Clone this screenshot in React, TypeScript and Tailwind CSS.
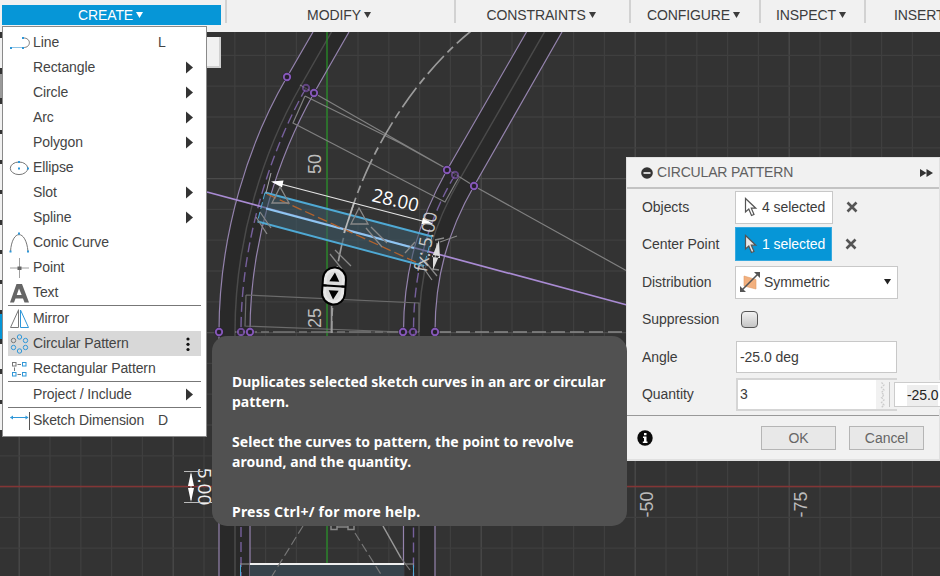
import React from "react";

const INK = "#3c3c3c";

type Item = { label: string; icon?: string; sub?: boolean; key_?: string; active?: boolean; top?: boolean };

const items: Item[] = [
  { label: "Line", icon: "line", key_: "L" },
  { label: "Rectangle", sub: true },
  { label: "Circle", sub: true },
  { label: "Arc", sub: true },
  { label: "Polygon", sub: true },
  { label: "Ellipse", icon: "ellipse" },
  { label: "Slot", sub: true },
  { label: "Spline", sub: true },
  { label: "Conic Curve", icon: "conic" },
  { label: "Point", icon: "point" },
  { label: "Text", icon: "text" },
  { label: "Mirror", icon: "mirror", top: true },
  { label: "Circular Pattern", icon: "circ", active: true },
  { label: "Rectangular Pattern", icon: "rect" },
  { label: "Project / Include", sub: true, top: true },
  { label: "Sketch Dimension", icon: "dim", key_: "D", top: true },
];

function MenuIcon({ name }: { name?: string }) {
  const b = "#2f97d8";
  const g = "#777";
  return (
    <svg width="25" height="24" viewBox="0 0 25 24" fill="none" className="shrink-0">
      {name === "line" && (
        <g>
          <path d="M3 16.500H15" stroke="#8cc3e6" />
          <path d="M15 7C23.500 6.500 23.500 17 15 16.500" stroke={g} />
          <path d="M2 16h2v2H2zM14 16h2v2h-2zM14 6h2v2h-2z" fill={b} />
        </g>
      )}
      {name === "ellipse" && (
        <g>
          <ellipse cx="11" cy="12.300" rx="8.700" ry="6.300" stroke={g} />
          <path d="M10 11.500h2v2h-2zM10 5h2v2h-2zM19 11.500h2v2h-2z" fill={b} />
        </g>
      )}
      {name === "conic" && (
        <g>
          <path d="M2.500 20.500C4 -2 18 -2 20 20.500" stroke={g} />
          <path d="M1.500 19.500h2v2h-2zM19 19.500h2v2h-2zM10 1.500h2v2h-2z" fill={b} />
        </g>
      )}
      {name === "point" && (
        <g>
          <path d="M2 12H21M11.500 2V22" stroke="#a0a0a0" />
          <path d="M9.500 10.500h4v3.500h-4z" fill="#666" />
        </g>
      )}
      {name === "text" && (
        <path fillRule="evenodd" fill="#666" d="M8.500 3h5.500l7 18.500h-4.500l-1.500-4H7.500l-1.500 4H2zM11 7.500 8.700 14h5z" />
      )}
      {name === "mirror" && (
        <g>
          <path d="M10.500 2.500V20.500H2.500L10.500 3" stroke={g} />
          <path d="M12.500 3V20.500H20.500L12.500 3" stroke={b} />
        </g>
      )}
      {name === "circ" && (
        <g stroke={b}>
          <circle cx="11.500" cy="5" r="2.200" />
          <circle cx="17.500" cy="8.500" r="2.200" />
          <circle cx="17.500" cy="15.500" r="2.200" />
          <circle cx="11.500" cy="19" r="2.200" />
          <circle cx="5.500" cy="15.500" r="2.200" />
          <circle cx="5.500" cy="8.500" r="2.200" stroke={g} />
        </g>
      )}
      {name === "rect" && (
        <g stroke={b}>
          <rect x="4.500" y="5.500" width="3.500" height="3.500" stroke={g} />
          <path d="M9.500 7.500H13M6.500 10.500V14M9.500 17.500H13" stroke={g} />
          <rect x="14.500" y="5.500" width="3.500" height="3.500" />
          <rect x="4.500" y="15.500" width="3.500" height="3.500" />
          <rect x="14.500" y="15.500" width="3.500" height="3.500" />
        </g>
      )}
      {name === "dim" && (
        <g>
          <path d="M2.500 8.500H20" stroke={b} />
          <path d="M2 8.500l3-2v4zM20.500 8.500l-3-2v4z" fill={b} />
          <path d="M21.500 3V21" stroke="#555" />
        </g>
      )}
    </svg>
  );
}

function Menu() {
  return (
    <div className="absolute left-[2px] top-[26px] flex h-[411px] w-[205px] flex-col border border-[#8a8a8a] bg-white px-[5px] pt-[3px] text-[14px] tracking-[-0.1px] text-[#444]">
      {items.map((it) => (
        <div key={it.label} className={it.top ? "border-t border-[#777]" : ""}>
          <div className={"flex h-[25px] items-center " + (it.active ? "bg-[#d8d8d8]" : "")}>
            <MenuIcon name={it.icon} />
            <span className="grow whitespace-nowrap">{it.label}</span>
            {it.key_ && <span className="w-[43px]">{it.key_}</span>}
            {it.sub && (
              <svg width="15" height="14" viewBox="0 0 15 14">
                <path d="M0 0.500 7 6.500 0 12.500z" fill="#333" />
              </svg>
            )}
            {it.active && (
              <svg width="16" height="16" viewBox="0 0 16 16" fill="#111">
                <circle cx="3" cy="3" r="1.600" />
                <circle cx="3" cy="8.300" r="1.600" />
                <circle cx="3" cy="13.500" r="1.600" />
              </svg>
            )}
          </div>
        </div>
      ))}
    </div>
  );
}

function Caret({ color = INK }: { color?: string }) {
  return (
    <svg width="7" height="6" viewBox="0 0 7 6" className="ml-[3px]">
      <path d="M0 0H7L3.500 6z" fill={color} />
    </svg>
  );
}

function Tab({ label, className }: { label: string; className: string }) {
  return (
    <div className={"flex h-[23px] shrink-0 items-center justify-center border-l-2 border-[#d2d2d2] pr-[3px] pt-[7px] " + className}>
      <span>{label}</span>
      <Caret />
    </div>
  );
}

function Toolbar() {
  return (
    <header className="relative flex h-8 w-[940px] items-start overflow-hidden bg-[#f1f1f1] text-[14px] tracking-[-0.1px] text-[#3c3c3c]">
      <div className="ml-[2px] mr-1 mt-[5px] flex h-5 w-[219px] shrink-0 items-center justify-center bg-[#0696d7] pr-[2px] text-white">
        CREATE
        <Caret color="#fff" />
      </div>
      <Tab label="MODIFY" className="w-[229px]" />
      <Tab label="CONSTRAINTS" className="w-[175px]" />
      <Tab label="CONFIGURE" className="w-[130px]" />
      <Tab label="INSPECT" className="w-[105px]" />
      <div className="flex h-[23px] shrink-0 items-center border-l-2 border-[#d2d2d2] pl-[28px] pt-[7px]">INSERT</div>
    </header>
  );
}

const vLines = Array.from({ length: 31 }, (_, i) => i - 10).map((n) => ({ p: 327.2 + n * 30.8, major: n % 5 === 0 }));
const hLines = Array.from({ length: 18 }, (_, i) => i - 14).map((n) => ({ p: 486.600 + n * 30.8, major: n % 5 === 0 }));
const points: [number, number, number][] = [
  [287, 77, 1], [306, 88, 0.6], [314, 93, 1], [447, 170, 1], [455, 175, 0.6], [474, 186, 1],
  [219, 332, 1], [241, 332, 0.8], [250, 332, 1], [403, 332, 1], [413, 332, 0.8], [435, 332, 1],
];

function Sketch() {
  return (
    <svg className="absolute inset-0" width="940" height="544" viewBox="0 32 940 544" fill="none">
      <rect y="32" width="940" height="544" fill="#333" />
      {vLines.map((l) => (
        <path key={l.p} d={`M${l.p} 32V576`} stroke={l.major ? "#4b4b4b" : "#3f3f3f"} strokeWidth="1.300" />
      ))}
      {hLines.map((l) => (
        <path key={l.p} d={`M0 ${l.p}H940`} stroke={l.major ? "#4b4b4b" : "#3f3f3f"} strokeWidth="1.300" />
      ))}
      <path d="M313 32 287 77C250 140 219 232 219 332V576H250V332C250 242 278 157 314 93L349 32z" fill="#292929" />
      <path d="M526.500 32 447 170C419 220 403.500 270 403.500 332V576H435V332C435 277 448 231 474 186L562 32z" fill="#292929" />
      <path d="M331.500 32 300 87C264 150 235 238 235 332V576M544.500 32 461 177C434 224 419 270 419 332V576" stroke="#4a4a4a" strokeWidth="1.500" />
      <path d="M0 486.500H940" stroke="#833535" strokeWidth="1.500" />
      <path d="M327 32V576" stroke="#278127" strokeWidth="1.500" />

      <g stroke="#9483ad" strokeWidth="1.200">
        <path d="M313 32 287 77C250 140 219 232 219 332V576M349 32 314 93C278 157 250 242 250 332V576" />
        <path d="M526.500 32 447 170C419 220 403.500 270 403.500 332V576M562 32 474 186C448 231 435 277 435 332V576" />
        <path d="M306 88C271 150 241 240 241 332V576M455 175C427 222 413.500 272 413.500 332V576" stroke="#76609c" strokeWidth="1.400" strokeDasharray="10 5" />
      </g>
      <g stroke="#808080" strokeWidth="1.200">
        <path d="M300 85 314 93 447 169M305 96 400 143 447 169 474 186 627 271M305 96 293 123 445 202 459 177" />
        <path d="M246 295 419 303V332M246 295 245 326 403 332" stroke="#6c6c6c" />
      </g>
      <path d="M235 332H419" stroke="#777" strokeWidth="1.500" strokeDasharray="22 4 8 4" />
      <path d="M437 332H627" stroke="#8a8a8a" strokeWidth="1.700" strokeDasharray="14 5" />
      <path d="M475 28C420 70 332 180 331.600 333" stroke="#9b9b9b" strokeWidth="1.700" strokeDasharray="24 5 8 5" />
      <path d="M331.600 306V333" stroke="#9b9b9b" strokeWidth="1.700" />

      <path d="M207 192 627 305" stroke="#a98bd3" strokeWidth="1.700" />
      <path d="M265 192.500 432 236.500 424 266 257.500 221.500z" fill="#3d5968" fillOpacity=".55" />
      <path d="M265 192.500 432 236.500M257.500 221.500 424 266" stroke="#4fa9d4" strokeWidth="1.900" />
      <path d="M265 192.500 257.500 221.500M432 236.500 424 266" stroke="#4fa9d4" strokeDasharray="7 3" />
      <path d="M266 208.500 414 248" stroke="#8fc6f2" strokeWidth="2.200" />
      <path d="M267 194 420 264" stroke="#b3622c" strokeWidth="1.300" strokeDasharray="10 4" />
      <path d="M354 203 344 233" stroke="#bbb" strokeWidth="1.600" />

      <path d="M273 182 430 223" stroke="#e5e5e5" strokeWidth="1.200" />
      <path d="M271 181.500 283.500 180.500 282 187.500zM433 224 423 217.500 421.500 224z" fill="#fff" />
      <path d="M271 173 266 193" stroke="#aaa" />
      <g stroke="#888" strokeWidth="1.300">
        <path d="M280 187 272 203H289zM359 208 351 224H368z" />
        <path d="M366 228 382 247M371 227 387 243M330 254 342 269M335 250 351 266M256 217 267 234M260 212 271 228M420 263 432 280M424 260 437 276M405 253 415 242M440 242 457 236M435 240 444 238M432 269 439 270" />
      </g>
      <path d="M437 243 434 266" stroke="#aaa" />
      <path d="M439 240 432 257 440 258zM433 270 433 255 439 256z" fill="#ddd" />

      <g className="font-['Open_Sans','Noto_Sans',sans-serif] text-[18.500px]" textAnchor="middle">
        <text transform="translate(394 206.500) rotate(13.500)" fill="#fff">28.00</text>
        <text transform="translate(432 243) rotate(-80)" fill="#c8c8c8" className="text-[18px]">fx: 5.00</text>
        <text transform="translate(198 486.500) rotate(90)" fill="#eee" className="text-[19px]">5.00</text>
      </g>
      <g className="font-['Liberation_Sans',Arial,sans-serif] text-[18px]" textAnchor="middle" fill="#bcbcbc">
        <text transform="translate(321 164) rotate(-90)">50</text>
        <text transform="translate(321 318) rotate(-90)">25</text>
        <text transform="translate(653 504.500) rotate(-90)">-50</text>
        <text transform="translate(807 504.500) rotate(-90)">-75</text>
      </g>

      <g stroke="#bbb">
        <path d="M184 471.500H203M184 502.500H212M191 474V500" />
      </g>
      <path d="M191 472 188 486H194zM191 502 188 488H194z" fill="#fff" />

      {points.map(([x, y, o]) => (
        <g key={x + "-" + y} opacity={o}>
          <circle cx={x} cy={y} r="4.700" fill="#25202c" />
          <circle cx={x} cy={y} r="3.200" stroke="#8557b8" strokeWidth="1.900" />
        </g>
      ))}

      <g transform="translate(334 286) rotate(4)">
        <rect x="-12.500" y="-19.500" width="25" height="39" rx="12.500" fill="#000" />
        <rect x="-10.500" y="-17.500" width="21" height="35" rx="10.500" fill="#e8e8e8" />
        <path d="M-12 0H12" stroke="#000" strokeWidth="2" />
        <rect x="-7.500" y="-14.500" width="15" height="29" rx="7.500" fill="#dcdcdc" />
        <path d="M-12 0H12" stroke="#000" strokeWidth="2" />
        <path d="M0 -13.500 5 -4.500H-5zM0 13.500 5 4.500H-5z" fill="#000" />
      </g>

      <path d="M250 565H404V576H250z" fill="#37434b" />
      <path d="M240 564H414" stroke="#999" />
      <path d="M250 564H404" stroke="#eee" strokeWidth="2" />
      <path d="M240.500 565V576M413.500 565V576" stroke="#4fa9d4" />
      <path d="M303 526 272 576M355 533 382 576" stroke="#777" strokeWidth="1.200" strokeDasharray="9 4" />
      <path d="M383 526 401 558" stroke="#999" strokeWidth="1.500" />
      <path d="M401 558 410 570" stroke="#777" strokeWidth="1.200" />
      <path d="M331 524.500H337V529.500H331zM348 524.500H354V529.500H348zM337 527H348" stroke="#888" strokeWidth="1.500" />
    </svg>
  );
}

function Tooltip() {
  return (
    <div className="absolute left-[212px] top-[336px] h-[190px] w-[415px] rounded-[15px] bg-[#515151] pl-5 pt-9 font-['Noto_Sans','Open_Sans',sans-serif] text-[14px] font-bold leading-5 text-white">
      <p className="whitespace-nowrap">Duplicates selected sketch curves in an arc or circular<br />pattern.</p>
      <p className="mt-5 whitespace-nowrap tracking-[0.05px]">Select the curves to pattern, the point to revolve<br />around, and the quantity.</p>
      <p className="mt-[30px] tracking-[0.22px]">Press Ctrl+/ for more help.</p>
    </div>
  );
}

function Pointer({ light }: { light?: boolean }) {
  return (
    <svg width="14" height="20" viewBox="0 0 14 20" className="shrink-0">
      <path d="M1.500 1.500V15L4.800 12 7.500 18.500 10 17.500 7.300 11.200H11.800z" fill={light ? "#e8e8e8" : "#fff"} stroke="#555" strokeWidth="1.200" />
    </svg>
  );
}

function Cross() {
  return (
    <svg width="12" height="12" viewBox="0 0 12 12">
      <path d="M1.500 1.500 10.500 10.500M10.500 1.500 1.500 10.500" stroke="#555" strokeWidth="2.600" />
    </svg>
  );
}

function Row({ label, className, children }: { label: string; className: string; children: React.ReactNode }) {
  return (
    <div className={"flex items-center " + className}>
      <span className="w-[93px] shrink-0">{label}</span>
      {children}
    </div>
  );
}

function Dialog() {
  return (
    <section className="absolute left-[626px] top-[157px] flex h-[304px] w-[314px] flex-col border-b-2 border-l border-r border-t border-[#e0e0e0] bg-[#f1f1f1] text-[14px] tracking-[-0.05px] text-[#3c3c3c]">
      <div className="flex h-[31px] shrink-0 items-center border-b-2 border-[#c3c3c3] pl-[14px] pr-[6px] text-[#606060]">
        <svg width="12" height="12" viewBox="0 0 12 12" className="mr-1">
          <circle cx="6" cy="6" r="5.800" fill="#333" />
          <path d="M2.500 6H9.500" stroke="#eee" strokeWidth="1.700" />
        </svg>
        <span className="grow tracking-[-0.16px]">CIRCULAR PATTERN</span>
        <svg width="13" height="8" viewBox="0 0 13 8">
          <path d="M0 0 6.500 4 0 8zM6.500 0 13 4 6.500 8z" fill="#333" />
        </svg>
      </div>
      <div className="flex h-[227px] shrink-0 flex-col border-b border-[#999] pl-[15px]">
        <Row label="Objects" className="mt-px h-[34px]">
          <div className="flex h-[33px] w-[98px] items-center border border-[#c8c8c8] bg-white pl-[8px]">
            <Pointer />
            <span className="ml-1 whitespace-nowrap">4 selected</span>
          </div>
          <div className="ml-[13px]"><Cross /></div>
        </Row>
        <Row label="Center Point" className="mt-[3px] h-[34px]">
          <div className="flex h-[34px] w-[97px] items-center border border-[#36a9df] bg-[#0696d7] pl-[8px] text-white">
            <Pointer light />
            <span className="ml-1 whitespace-nowrap">1 selected</span>
          </div>
          <div className="ml-[13px]"><Cross /></div>
        </Row>
        <Row label="Distribution" className="mt-[4px] h-[34px]">
          <div className="flex h-[33px] w-[163px] items-center border border-[#c8c8c8] bg-white pl-[3px] pr-[6px]">
            <svg width="22" height="22" viewBox="0 0 22 22">
              <path d="M5 5 17 8.500V18L5 15z" fill="#f2b07e" stroke="#e09a66" strokeWidth=".6" />
              <path d="M2.500 19.500 19.500 2.500" stroke="#555" strokeWidth="1.600" />
              <path d="M21 1V7L15 1zM1 21V15L7 21z" fill="#555" />
            </svg>
            <span className="ml-[3px] grow">Symmetric</span>
            <svg width="7" height="6" viewBox="0 0 7 6"><path d="M0 0H7L3.500 5.500z" fill="#222" /></svg>
          </div>
        </Row>
        <Row label="Suppression" className="mt-[3px] h-[34px]">
          <div className="ml-[6px] h-[17px] w-[17px] rounded-[4px] border-[1.500px] border-[#555] bg-linear-to-b from-[#f2f2f2] to-[#c5c5c5]" />
        </Row>
        <Row label="Angle" className="mt-[5px] h-[32px]">
          <div className="ml-px flex h-[32px] w-[161px] items-center border border-[#c8c8c8] bg-white pl-[3px]">-25.0 deg</div>
        </Row>
        <Row label="Quantity" className="mt-[5px] h-[33px]">
          <div className="ml-px flex h-[33px] w-[161px] items-center border-2 border-[#d5d5d5] bg-white pl-[2px]">3</div>
        </Row>
      </div>
      <div className="flex h-[42px] items-center pl-[10px] pr-[15px] pt-px">
        <svg width="16" height="16" viewBox="0 0 16 16">
          <circle cx="8" cy="8" r="7.700" fill="#0a0a0a" />
          <path d="M7 3H9.500V5.200H7zM6 6.500H9.500V11.500H10.500V13H5.800V11.500H7V8H6z" fill="#fff" />
        </svg>
        <div className="ml-auto flex h-6 w-[75px] items-center justify-center border border-[#b5b5b5] bg-[#e8e8e8] pt-px text-[#666]">OK</div>
        <div className="ml-[13px] flex h-6 w-[75px] items-center justify-center border border-[#b5b5b5] bg-[#e8e8e8] pt-px text-[#666]">Cancel</div>
      </div>
    </section>
  );
}

function FloatingValue() {
  return (
    <div className="absolute left-[876px] top-[380px] flex h-[29px] w-[64px] items-center overflow-hidden bg-[#f1f1f1] text-[14px] text-[#222]">
      <svg width="18" height="29" viewBox="0 0 18 29" fill="none" className="shrink-0">
        <path d="M5.500 2.500 8 5 5.500 7.500 8 10 5.500 12.500 8 15 5.500 17.500 8 20 5.500 22.500 8 25 5.500 27.500" stroke="#ccc" strokeWidth="1.300" strokeDasharray="2 1" />
        <path d="M13.500 2V27" stroke="#c5c5c5" />
      </svg>
      <div className="flex h-[25px] w-[60px] shrink-0 items-center border border-[#ccc] bg-white pl-[12px] pt-px">
        <span className="bg-[#eee] tracking-[-0.1px]">-25.0</span>
      </div>
    </div>
  );
}

const slivers = [
  "top-[38px] h-[30px] bg-[#f1f1f1]",
  "top-[74px] h-[24px] bg-[#9a9a9a]",
  "top-[104px] h-[26px] bg-[#f1f1f1]",
  "top-[134px] h-[26px] bg-[#f1f1f1]",
  "top-[164px] h-[26px] bg-[#f1f1f1]",
  "top-[194px] h-[26px] bg-[#f1f1f1]",
  "top-[225px] h-[25px] bg-[#f1f1f1]",
  "top-[254px] h-[26px] bg-[#f1f1f1]",
  "top-[284px] h-[26px] bg-[#f1f1f1]",
  "top-[314px] h-[25px] bg-[#0696d7]",
  "top-[344px] h-[25px] bg-[#f1f1f1]",
  "top-[374px] h-[26px] bg-[#f1f1f1]",
  "top-[404px] h-[26px] bg-[#f1f1f1]",
];

export default function App() {
  return (
    <div className="relative flex h-[576px] w-[940px] flex-col overflow-hidden bg-[#333] font-['Liberation_Sans',Arial,sans-serif]">
      <Toolbar />
      <main className="relative grow">
        <Sketch />
      </main>
      {slivers.map((s) => (
        <div key={s} className={"absolute left-0 w-[2px] " + s} />
      ))}
      <div className="absolute left-[206px] top-[37px] h-[31px] w-[15px] border-b-2 border-r-2 border-[#d0d0d0] bg-[#f1f1f1]" />
      <Menu />
      <Dialog />
      <FloatingValue />
      <Tooltip />
    </div>
  );
}
